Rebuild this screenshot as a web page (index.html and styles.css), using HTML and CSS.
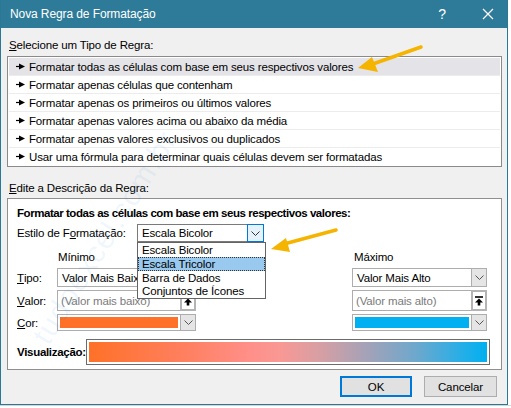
FILE: index.html
```html
<!DOCTYPE html>
<html lang="pt-BR">
<head>
<meta charset="utf-8">
<title>Nova Regra de Formatação</title>
<link rel="stylesheet" href="styles.css">
</head>
<body>
<div class="screen">
  <div class="dialog">
    <div class="titlebar">
      <span class="title">Nova Regra de Formatação</span>
      <span class="tb-help">?</span>
      <span class="tb-close"><svg width="12" height="12" viewBox="0 0 12 12"><path d="M1 1L11 11M11 1L1 11" stroke="#fff" stroke-width="1.2" fill="none"/></svg></span>
    </div>
    <div class="content">
      <div class="section-label"><u>S</u>elecione um Tipo de Regra:</div>
      <ul class="rulelist">
        <li class="sel"><span class="bullet"><svg width="9" height="7" viewBox="0 0 9 7"><path d="M0 3.5H4" stroke="#000" stroke-width="1.2"/><path d="M3 0.5L9 3.5L3 6.5Z" fill="#000"/></svg></span>Formatar todas as células com base em seus respectivos valores</li>
        <li><span class="bullet"><svg width="9" height="7" viewBox="0 0 9 7"><path d="M0 3.5H4" stroke="#000" stroke-width="1.2"/><path d="M3 0.5L9 3.5L3 6.5Z" fill="#000"/></svg></span>Formatar apenas células que contenham</li>
        <li><span class="bullet"><svg width="9" height="7" viewBox="0 0 9 7"><path d="M0 3.5H4" stroke="#000" stroke-width="1.2"/><path d="M3 0.5L9 3.5L3 6.5Z" fill="#000"/></svg></span>Formatar apenas os primeiros ou últimos valores</li>
        <li><span class="bullet"><svg width="9" height="7" viewBox="0 0 9 7"><path d="M0 3.5H4" stroke="#000" stroke-width="1.2"/><path d="M3 0.5L9 3.5L3 6.5Z" fill="#000"/></svg></span>Formatar apenas valores acima ou abaixo da média</li>
        <li><span class="bullet"><svg width="9" height="7" viewBox="0 0 9 7"><path d="M0 3.5H4" stroke="#000" stroke-width="1.2"/><path d="M3 0.5L9 3.5L3 6.5Z" fill="#000"/></svg></span>Formatar apenas valores exclusivos ou duplicados</li>
        <li><span class="bullet"><svg width="9" height="7" viewBox="0 0 9 7"><path d="M0 3.5H4" stroke="#000" stroke-width="1.2"/><path d="M3 0.5L9 3.5L3 6.5Z" fill="#000"/></svg></span>Usar uma fórmula para determinar quais células devem ser formatadas</li>
      </ul>
      <div class="section-label section-label-2"><u>E</u>dite a Descrição da Regra:</div>
      <div class="panel">
        <div class="panel-title">Formatar todas as células com base em seus respectivos valores:</div>
        <div class="style-row">
          <span class="style-label">Estilo de F<u>o</u>rmatação:</span>
          <div class="combo-wrap">
            <div class="combo combo-focus">
              <span class="combo-text">Escala Bicolor</span>
              <span class="combo-btn"><svg width="9" height="5" viewBox="0 0 9 5"><path d="M0.5 0.5L4.5 4.5L8.5 0.5" stroke="#333" stroke-width="1" fill="none"/></svg></span>
            </div>
            <ul class="dropdown">
              <li>Escala Bicolor</li>
              <li class="hl">Escala Tricolor</li>
              <li>Barra de Dados</li>
              <li>Conjuntos de Ícones</li>
            </ul>
          </div>
        </div>
        <div class="grid">
          <span></span>
          <span class="col-head">Mínimo</span>
          <span></span>
          <span class="col-head col-head-r">Máximo</span>

          <span class="row-label"><u>T</u>ipo:</span>
          <div class="combo combo-tipo">
            <span class="combo-text">Valor Mais Baixo</span>
            <span class="combo-btn"><svg width="9" height="5" viewBox="0 0 9 5"><path d="M0.5 0.5L4.5 4.5L8.5 0.5" stroke="#555" stroke-width="1" fill="none"/></svg></span>
          </div>
          <span></span>
          <div class="combo combo-tipo">
            <span class="combo-text">Valor Mais Alto</span>
            <span class="combo-btn"><svg width="9" height="5" viewBox="0 0 9 5"><path d="M0.5 0.5L4.5 4.5L8.5 0.5" stroke="#555" stroke-width="1" fill="none"/></svg></span>
          </div>

          <span class="row-label"><u>V</u>alor:</span>
          <div class="field">
            <span class="field-text">(Valor mais baixo)</span>
            <span class="field-btn"><svg width="10" height="10" viewBox="0 0 10 10"><path d="M1 1H9" stroke="#000" stroke-width="1.6"/><path d="M5 2.5L9 6.5H6.3V9.5H3.7V6.5H1Z" fill="#000"/></svg></span>
          </div>
          <span></span>
          <div class="field">
            <span class="field-text">(Valor mais alto)</span>
            <span class="field-btn"><svg width="10" height="10" viewBox="0 0 10 10"><path d="M1 1H9" stroke="#000" stroke-width="1.6"/><path d="M5 2.5L9 6.5H6.3V9.5H3.7V6.5H1Z" fill="#000"/></svg></span>
          </div>

          <span class="row-label"><u>C</u>or:</span>
          <div class="combo combo-color">
            <span class="swatch swatch-orange"></span>
            <span class="combo-btn"><svg width="9" height="5" viewBox="0 0 9 5"><path d="M0.5 0.5L4.5 4.5L8.5 0.5" stroke="#555" stroke-width="1" fill="none"/></svg></span>
          </div>
          <span></span>
          <div class="combo combo-color">
            <span class="swatch swatch-blue"></span>
            <span class="combo-btn"><svg width="9" height="5" viewBox="0 0 9 5"><path d="M0.5 0.5L4.5 4.5L8.5 0.5" stroke="#555" stroke-width="1" fill="none"/></svg></span>
          </div>
        </div>
        <div class="preview-row">
          <span class="preview-label">Visualização:</span>
          <div class="preview-bar"><div class="preview-fill"></div></div>
        </div>
      </div>
      <div class="buttons">
        <button class="btn btn-default">OK</button>
        <button class="btn">Cancelar</button>
      </div>
    </div>
  </div>
  <div class="sheet-strip"></div>

  <div class="watermark">tudoexcel.com.br</div>

  <svg class="arrows" width="511" height="408" viewBox="0 0 511 408">
    <path d="M421 47L370 65" stroke="#f5b400" stroke-width="3.5" stroke-linecap="round"/>
    <path d="M358 68L372 57L378 72Z" fill="#f5b400"/>
    <path d="M336 230L284 244" stroke="#f5b400" stroke-width="3.5" stroke-linecap="round"/>
    <path d="M271 249L286 238L290 252Z" fill="#f5b400"/>
  </svg>
</div>
</body>
</html>
```

FILE: styles.css
```css
* { box-sizing: border-box; }
html, body { margin: 0; padding: 0; }
body {
  background: #fff;
  font-family: "Liberation Sans", Arial, sans-serif;
  font-size: 11.5px;
  letter-spacing: -0.15px;
  color: #000;
}
u { text-decoration: underline; text-underline-offset: 1px; }

.screen {
  position: relative;
  width: 511px;
  height: 408px;
  overflow: hidden;
  background: #fff;
}

.dialog {
  width: 508px;
  height: 405px;
  border: 1px solid #2b7896;
  border-top: 0;
  background: #f0f0f0;
  display: flex;
  flex-direction: column;
}

.titlebar {
  height: 28px;
  flex: none;
  background: #2e7b99;
  color: #fff;
  display: flex;
  align-items: center;
  padding-left: 9px;
}
.title { flex: 1; font-size: 12px; letter-spacing: -0.1px; }
.tb-help {
  width: 14px;
  text-align: center;
  font-size: 14px;
  margin-right: 29px;
}
.tb-close {
  width: 20px;
  height: 14px;
  display: flex;
  align-items: center;
  justify-content: center;
  margin-right: 9px;
}

.content {
  flex: 1;
  display: flex;
  flex-direction: column;
  padding: 0 5px 0 6px;
}

.section-label {
  line-height: 16px;
  margin-top: 9px;
  padding-left: 2px;
}
.section-label-2 { margin-top: 13px; }

.rulelist {
  list-style: none;
  margin: 3px 0 0;
  padding: 1px;
  border: 1px solid #8a8a8a;
  background: #fff;
}
.rulelist li {
  height: 18px;
  border-bottom: 1px solid #ececec;
  display: flex;
  align-items: center;
  padding-left: 7px;
  white-space: nowrap;
}
.rulelist li:last-child { border-bottom: 0; height: 17px; }
.rulelist li.sel { background: #e3e3e8; }
.bullet {
  width: 9px;
  height: 7px;
  margin-right: 4px;
  display: flex;
}

.panel {
  margin-top: 2px;
  border: 1px solid #8f8f8f;
  background: #fff;
  padding: 6px 14px 4px 9px;
}
.panel-title {
  font-weight: bold;
  line-height: 16px;
  letter-spacing: -0.45px;
}

.style-row {
  display: flex;
  align-items: flex-start;
  margin-top: 3px;
}
.style-label {
  width: 120px;
  line-height: 16px;
  padding-top: 1px;
}
.combo-wrap { position: relative; }

.combo {
  display: flex;
  border: 1px solid #adadad;
  background: #fff;
}
.combo-text {
  flex: 1;
  padding-left: 4px;
  white-space: nowrap;
  overflow: hidden;
  display: flex;
  align-items: center;
}
.combo-btn {
  width: 15px;
  flex: none;
  background: #e5e5e5;
  border-left: 1px solid #adadad;
  display: flex;
  align-items: center;
  justify-content: center;
}
.combo-focus {
  width: 127px;
  height: 18px;
  border-color: #7a7a7a;
}
.combo-focus .combo-text { padding-left: 4px; }
.combo-focus .combo-btn {
  width: 17px;
  background: #e5f1fb;
  border: 1px solid #0078d7;
  margin: -1px -1px -1px 0;
  height: 18px;
}

.dropdown {
  position: absolute;
  left: 0;
  top: 18px;
  width: 129px;
  margin: 0;
  padding: 0;
  list-style: none;
  background: #fff;
  border: 1px solid #646464;
  z-index: 5;
}
.dropdown li {
  height: 13.75px;
  line-height: 13px;
  padding-left: 3px;
  white-space: nowrap;
  border: 1px solid transparent;
}
.dropdown li.hl {
  background: #99c9ef;
  border: 1px dotted #333;
}

.grid {
  display: grid;
  grid-template-columns: 40px 139px 1fr 135px;
  grid-template-rows: 15px 19px 21px 17px;
  row-gap: 3px;
  margin-top: 8px;
}
.col-head { line-height: 15px; padding-left: 1px; }
.col-head-r { padding-left: 2px; }
.row-label { display: flex; align-items: center; }

.combo-tipo { height: 19px; }

.field {
  display: flex;
  border: 1px solid #adadad;
  background: #fff;
  height: 21px;
}
.field-text {
  flex: 1;
  color: #7a7a7a;
  padding-left: 3px;
  display: flex;
  align-items: center;
  white-space: nowrap;
  overflow: hidden;
}
.field-btn {
  width: 16px;
  flex: none;
  border: 2px solid #b4b4b4;
  margin: -1px -1px -1px 0;
  background: #fff;
  display: flex;
  align-items: center;
  justify-content: center;
}

.combo-color { height: 17px; }
.swatch {
  flex: 1;
  margin: 2px;
}
.swatch-orange { background: #ff7128; }
.swatch-blue { background: #00b0f0; }

.preview-row {
  display: flex;
  align-items: center;
  margin-top: 8px;
}
.preview-label {
  width: 69px;
  font-weight: bold;
  letter-spacing: -0.3px;
}
.preview-bar {
  flex: 1;
  height: 26px;
  border: 1px solid #6b6b6b;
  padding: 2px;
  background: #fff;
  margin-right: -3px;
}
.preview-fill {
  height: 100%;
  background: linear-gradient(to right,
    #ff7128 0%,
    #ff8062 25%,
    #ff8f88 40%,
    #f99894 48%,
    #d79fa4 58%,
    #a3a2b8 70%,
    #6ea8cc 82%,
    #2aaee6 93%,
    #00b0f0 100%);
}

.buttons {
  display: flex;
  justify-content: flex-end;
  gap: 12px;
  margin-top: 6px;
  padding-right: 5px;
}
.btn {
  height: 21px;
  font-family: inherit;
  font-size: 11.5px;
  letter-spacing: -0.1px;
  background: #e1e1e1;
  border: 1px solid #adadad;
  color: #000;
  padding: 0;
  width: 73px;
}
.btn-default {
  width: 72px;
  border: 2px solid #0078d7;
}

.sheet-strip {
  height: 3px;
  background: #fff;
  border-top: 1px solid #d4d4d4;
}

.watermark {
  position: absolute;
  left: -40px;
  top: 180px;
  width: 340px;
  font-size: 30px;
  letter-spacing: 1px;
  color: rgba(0, 120, 215, 0.08);
  transform: rotate(-58deg);
  transform-origin: center;
  pointer-events: none;
  white-space: nowrap;
}

.arrows {
  position: absolute;
  left: 0;
  top: 0;
  pointer-events: none;
}
```
